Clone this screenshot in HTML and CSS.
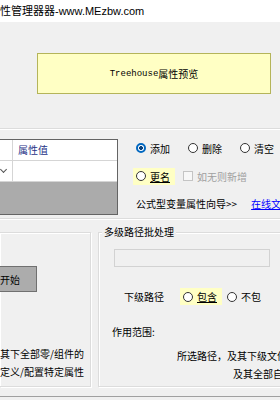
FILE: index.html
```html
<html>
<head>
<meta charset="utf-8">
<link rel="stylesheet" href="styles.css">
</head>
<body>
<div class="titlebar">性管理器器-www.MEzbw.com</div>

<div class="preview">
  <div class="previewBox"><span class="mono">Treehouse</span>属性预览</div>
</div>

<div class="sep"></div>

<div class="midRow">
  <div class="grid">
    <div class="gridHead">
      <div class="cellA"></div>
      <div class="cellB">属性值</div>
    </div>
    <div class="gridRow">
      <div class="cellA"><span class="chev"></span></div>
      <div class="cellB"></div>
    </div>
    <div class="gridEmpty"></div>
  </div>

  <div class="ops">
    <div class="opLine">
      <label class="opt"><span class="radio on"></span>添加</label>
      <label class="opt"><span class="radio"></span>删除</label>
      <label class="opt"><span class="radio"></span>清空</label>
    </div>
    <div class="opLine">
      <label class="opt hl"><span class="radio"></span><u>更名</u></label>
      <label class="opt off"><span class="check"></span>如无则新增</label>
    </div>
    <div class="opLine wizard">
      <span>公式型变量属性向导&gt;&gt;</span>
      <a class="link">在线文</a>
    </div>
  </div>
</div>

<div class="sep sep2"></div>

<div class="groups">
  <div class="group left">
    <div class="startBtn">开始</div>
    <div class="note">
      <div>其下全部零/组件的</div>
      <div>定义/配置特定属性</div>
    </div>
  </div>
  <div class="group right">
    <div class="legend">多级路径批处理</div>
    <div class="pathInput"></div>
    <div class="subLine">
      <span class="subLabel">下级路径</span>
      <label class="opt hl"><span class="radio"></span><u>包含</u></label>
      <label class="opt"><span class="radio"></span>不包</label>
    </div>
    <div class="scope">作用范围:</div>
    <div class="scopeText">
      <div class="l1">所选路径，及其下级文件</div>
      <div class="l2">及其全部自</div>
    </div>
  </div>
</div>

<div class="bottomLine"></div>
</body>
</html>
```

FILE: styles.css
```css
body{
    margin: 0;
    width: 280px;
    height: 400px;
    overflow: hidden;
    background-color: #f0f0f0;
    font-family: "Noto Sans CJK SC", "Noto Sans", sans-serif;
    font-size: 10px;
    color: #000;
}
.titlebar{
    height: 22px;
    line-height: 23px;
    background-color: #fff;
    font-family: "Liberation Sans", "Noto Sans CJK SC", sans-serif;
    font-size: 11px;
    white-space: nowrap;
}
.preview{
    padding: 31px 0 0 37px;
}
.previewBox{
    box-sizing: border-box;
    width: 234px;
    height: 41px;
    background-color: #ffffc4;
    border: 1px solid #b4b45a;
    display: flex;
    align-items: center;
    justify-content: center;
}
.mono{
    font-family: "Liberation Mono", monospace;
    font-size: 9px;
}
.sep{
    margin-top: 34px;
    border-top: 1px solid #dcdcdc;
    border-bottom: 1px solid #fff;
}
.midRow{
    display: flex;
    align-items: flex-start;
    height: 76px;
    margin-top: 9px;
}
.grid{
    box-sizing: border-box;
    flex-shrink: 0;
    width: 118px;
    height: 76px;
    border: 1px solid #646464;
    border-left: none;
    display: flex;
    flex-direction: column;
    background-color: #ababab;
}
.gridHead, .gridRow{
    display: flex;
    height: 20px;
    background-color: #fff;
    border-bottom: 1px solid #d5d5d5;
}
.cellA{
    width: 12px;
    border-right: 1px solid #d5d5d5;
    display: flex;
    align-items: center;
    justify-content: center;
}
.cellB{
    flex: 1;
    padding-left: 5px;
    line-height: 20px;
    color: #1e3287;
}
.chev{
    width: 4px;
    height: 4px;
    border-right: 1px solid #555;
    border-bottom: 1px solid #555;
    transform: rotate(45deg);
    margin-top: -3px;
    margin-left: -6px;
}
.gridEmpty{
    flex: 1;
}
.ops{
    padding-left: 18px;
    padding-top: 1px;
    display: flex;
    flex-direction: column;
}
.opLine{
    display: flex;
    align-items: center;
    height: 16px;
    gap: 18px;
    white-space: nowrap;
    margin-bottom: 12px;
}
.opt{
    display: flex;
    align-items: center;
    gap: 4px;
}
.hl{
    background-color: #ffffc4;
    padding: 1px 5px 1px 3px;
    margin-left: -3px;
    margin-right: -10px;
}
.radio{
    box-sizing: border-box;
    width: 10px;
    height: 10px;
    border: 1px solid #333;
    border-radius: 50%;
    background-color: #fff;
}
.radio.on{
    border: 2px solid #0067c0;
    background: radial-gradient(circle, #0a3f7a 0 1.6px, #fff 2.2px);
}
.check{
    box-sizing: border-box;
    width: 10px;
    height: 10px;
    border: 1px solid #c4c4c4;
    background-color: #f7f7f7;
}
.off{
    color: #a0a0a0;
}
.wizard{
    gap: 14px;
    margin-top: -1px;
}
.link{
    color: #0000ff;
    text-decoration: underline;
}
.sep2{
    margin-top: 3px;
}
.groups{
    display: flex;
    margin-top: 12px;
    gap: 7px;
}
.group{
    box-sizing: border-box;
    height: 155px;
    border: 1px solid #dcdcdc;
    box-shadow: inset 1px 1px 0 #fff, 1px 1px 0 #fff;
    position: relative;
}
.left{
    width: 91px;
    border-left: none;
    display: flex;
    flex-direction: column;
}
.startBtn{
    box-sizing: border-box;
    width: 54px;
    height: 26px;
    margin: 33px 0 0 -17px;
    background-color: #acacac;
    border: 1px solid #707070;
    display: flex;
    align-items: center;
    justify-content: center;
    font-size: 10px;
}
.note{
    margin-top: 53px;
    display: flex;
    flex-direction: column;
    align-items: flex-end;
    padding-right: 6px;
    white-space: nowrap;
    line-height: 18px;
}
.right{
    flex: 1;
    margin-right: -40px;
    border-right: none;
}
.legend{
    position: absolute;
    top: -8px;
    left: 3px;
    padding: 0 2px;
    background-color: #f0f0f0;
    font-size: 10px;
    line-height: 14px;
}
.pathInput{
    box-sizing: border-box;
    margin: 16px 0 0 15px;
    width: 156px;
    height: 18px;
    background-color: #f0f0f0;
    border: 1px solid #d2d2d2;
}
.subLine{
    display: flex;
    align-items: center;
    gap: 19px;
    margin: 21px 0 0 25px;
    white-space: nowrap;
}
.subLine .hl{
    margin-right: -14px;
}
.scope{
    margin: 19px 0 0 13px;
}
.scopeText{
    margin-top: 8px;
    white-space: nowrap;
    line-height: 18px;
}
.l1{
    padding-left: 78px;
}
.l2{
    padding-left: 134px;
}
.bottomLine{
    margin-top: 9px;
    border-top: 1px solid #a0a0a0;
}
```
